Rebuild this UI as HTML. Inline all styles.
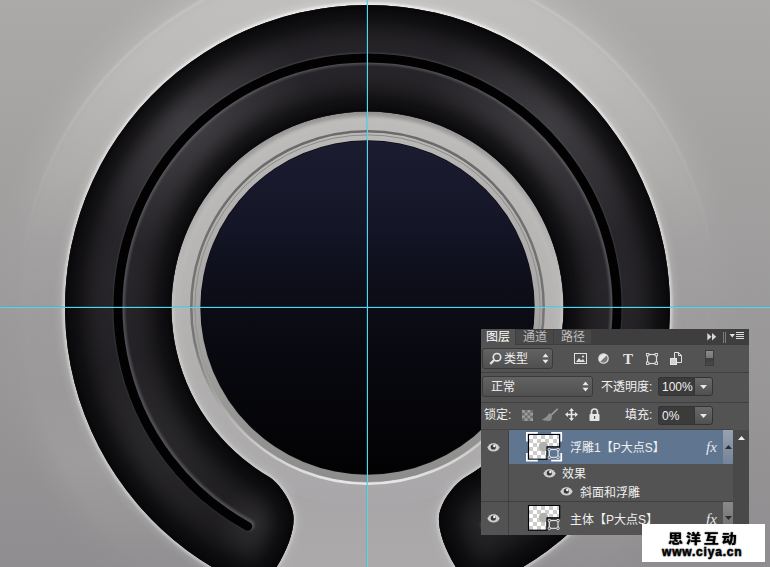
<!DOCTYPE html>
<html lang="zh">
<head>
<meta charset="utf-8">
<title>PS</title>
<style>
html,body{margin:0;padding:0;background:#a09e9e;}
body{width:770px;height:567px;overflow:hidden;position:relative;font-family:"Liberation Sans","Noto Sans CJK SC",sans-serif;}
#art{position:absolute;left:0;top:0;display:block;}
#panel{position:absolute;left:481px;top:329px;width:268px;height:206px;background:#535353;color:#f0f0f0;font-size:12px;overflow:hidden;}
#panel div{position:absolute;box-sizing:border-box;}
#panel .t{white-space:nowrap;line-height:14px;height:14px;}
#wm{position:absolute;left:642px;top:524px;width:123px;height:38px;background:#fff;}
#wm div{position:absolute;white-space:nowrap;color:#000;}
</style>
</head>
<body>
<svg id="art" width="770" height="567" viewBox="0 0 770 567">
<defs>
<linearGradient id="bg" x1="0" y1="0" x2="0" y2="1">
<stop offset="0" stop-color="#abaaa8"/><stop offset="1" stop-color="#8f8d8f"/>
</linearGradient>
<linearGradient id="plat" gradientUnits="userSpaceOnUse" x1="0" y1="-42" x2="0" y2="657">
<stop offset="0" stop-color="#c9c8c6"/><stop offset="0.15" stop-color="#c2c1bf"/><stop offset="0.3" stop-color="#b2b1af"/><stop offset="0.4" stop-color="#a5a3a3"/><stop offset="0.5" stop-color="#9f9d9d"/><stop offset="0.62" stop-color="#9d9b9b"/><stop offset="0.72" stop-color="#a19f9f"/><stop offset="0.8" stop-color="#9a9899"/><stop offset="0.87" stop-color="#929092"/><stop offset="1" stop-color="#8f8d8f"/>
</linearGradient>
<linearGradient id="platin" gradientUnits="userSpaceOnUse" x1="0" y1="-42" x2="0" y2="657">
<stop offset="0" stop-color="#c9c8c6"/><stop offset="0.15" stop-color="#c2c1bf"/><stop offset="0.3" stop-color="#b2b1af"/><stop offset="0.4" stop-color="#a5a3a3"/><stop offset="0.5" stop-color="#9f9d9d"/><stop offset="0.62" stop-color="#9d9b9b"/><stop offset="0.8" stop-color="#a9a7a7"/><stop offset="1" stop-color="#b0aeae"/>
</linearGradient>
<linearGradient id="disc" gradientUnits="userSpaceOnUse" x1="0" y1="141" x2="0" y2="474">
<stop offset="0" stop-color="#1b1c30"/><stop offset="0.25" stop-color="#141526"/><stop offset="0.5" stop-color="#0b0c15"/><stop offset="1" stop-color="#020203"/>
</linearGradient>
<radialGradient id="ringrad" gradientUnits="userSpaceOnUse" cx="367.5" cy="307.5" r="302.5">
<stop offset="0.648" stop-color="#0e0d10"/><stop offset="0.665" stop-color="#18161a"/><stop offset="0.711" stop-color="#211f23"/><stop offset="0.777" stop-color="#2c2a2e"/><stop offset="0.81" stop-color="#353337"/>
<stop offset="0.84" stop-color="#2c2a2e"/><stop offset="0.893" stop-color="#232125"/><stop offset="0.942" stop-color="#19171b"/><stop offset="0.975" stop-color="#111013"/><stop offset="1" stop-color="#09080a"/>
</radialGradient>
<linearGradient id="ringshade" gradientUnits="userSpaceOnUse" x1="0" y1="5" x2="0" y2="567">
<stop offset="0" stop-color="#000" stop-opacity="0.16"/><stop offset="0.2" stop-color="#000" stop-opacity="0.02"/><stop offset="0.5" stop-color="#000" stop-opacity="0.06"/><stop offset="0.8" stop-color="#000" stop-opacity="0.26"/><stop offset="1" stop-color="#000" stop-opacity="0.3"/>
</linearGradient>
<radialGradient id="sheen">
<stop offset="0" stop-color="#fff" stop-opacity="0.13"/><stop offset="0.5" stop-color="#fff" stop-opacity="0.07"/><stop offset="1" stop-color="#fff" stop-opacity="0"/>
</radialGradient>
<linearGradient id="iring" gradientUnits="userSpaceOnUse" x1="0" y1="111" x2="0" y2="504">
<stop offset="0" stop-color="#bdbcba"/><stop offset="0.5" stop-color="#b4b3b1"/><stop offset="1" stop-color="#a9a7a9"/>
</linearGradient>
<linearGradient id="bevel" gradientUnits="userSpaceOnUse" x1="0" y1="132" x2="0" y2="483">
<stop offset="0" stop-color="#bab9b7"/><stop offset="0.5" stop-color="#a8a7a5"/><stop offset="1" stop-color="#8c8c8a"/>
</linearGradient>
<linearGradient id="bevline" gradientUnits="userSpaceOnUse" x1="0" y1="132" x2="0" y2="483">
<stop offset="0" stop-color="#6a6a68"/><stop offset="0.6" stop-color="#777775"/><stop offset="0.8" stop-color="#b0b0ae"/><stop offset="1" stop-color="#e6e6e6"/>
</linearGradient>
<linearGradient id="ridge" gradientUnits="userSpaceOnUse" x1="0" y1="-42" x2="0" y2="657">
<stop offset="0" stop-color="#fff" stop-opacity="0.32"/><stop offset="0.3" stop-color="#fff" stop-opacity="0.12"/><stop offset="0.45" stop-color="#fff" stop-opacity="0"/>
</linearGradient>
<linearGradient id="bevline2" gradientUnits="userSpaceOnUse" x1="0" y1="132" x2="0" y2="483">
<stop offset="0" stop-color="#8a8a88"/><stop offset="0.5" stop-color="#8f8f8d"/><stop offset="0.75" stop-color="#8a8a88" stop-opacity="0"/>
</linearGradient>
<linearGradient id="ishadow" gradientUnits="userSpaceOnUse" x1="0" y1="111" x2="0" y2="370">
<stop offset="0" stop-color="#1a1a1a" stop-opacity="0.42"/><stop offset="0.45" stop-color="#1a1a1a" stop-opacity="0.3"/><stop offset="1" stop-color="#1a1a1a" stop-opacity="0"/>
</linearGradient>
<linearGradient id="edgehl" gradientUnits="userSpaceOnUse" x1="0" y1="0" x2="0" y2="567">
<stop offset="0" stop-color="#ececea"/><stop offset="0.5" stop-color="#d0d0ce"/><stop offset="1" stop-color="#c4c4c4"/>
</linearGradient>
<filter id="b05" color-interpolation-filters="sRGB" x="-10%" y="-10%" width="120%" height="120%"><feGaussianBlur stdDeviation="0.5"/></filter>
<filter id="b1" color-interpolation-filters="sRGB" x="-10%" y="-10%" width="120%" height="120%"><feGaussianBlur stdDeviation="0.8"/></filter>
<filter id="b2" color-interpolation-filters="sRGB" x="-10%" y="-10%" width="120%" height="120%"><feGaussianBlur stdDeviation="2"/></filter>
<filter id="b4" color-interpolation-filters="sRGB" x="-10%" y="-10%" width="120%" height="120%"><feGaussianBlur stdDeviation="3.500"/></filter>
<filter id="b5" color-interpolation-filters="sRGB" x="-10%" y="-10%" width="120%" height="120%"><feGaussianBlur stdDeviation="5"/></filter>
<filter id="b8" color-interpolation-filters="sRGB" x="-10%" y="-10%" width="120%" height="120%"><feGaussianBlur stdDeviation="8"/></filter>
<filter id="b9" color-interpolation-filters="sRGB" x="-10%" y="-10%" width="120%" height="120%"><feGaussianBlur stdDeviation="9"/></filter>
<filter id="b10" color-interpolation-filters="sRGB" x="-10%" y="-10%" width="120%" height="120%"><feGaussianBlur stdDeviation="10"/></filter>
<filter id="b12" color-interpolation-filters="sRGB" x="-10%" y="-10%" width="120%" height="120%"><feGaussianBlur stdDeviation="12"/></filter>
<filter id="b16" color-interpolation-filters="sRGB" x="-20%" y="-20%" width="140%" height="140%"><feGaussianBlur stdDeviation="16"/></filter>
<path id="ringp" d="M270,477.500 C279,483.500 293.6,503 293.6,519 C293.6,533 287,550 276.600,567 L266,585 L247.100,585 A302.5,302.500 0 1 1 487.900,585 L466.500,585 L455.800,567 C445.500,550 438.900,533 438.900,519 C438.900,503 455,483.500 465,477.500 A196,196 0 1 0 270,477.500 Z"/>
<clipPath id="icl"><circle cx="367.5" cy="307.5" r="197"/></clipPath>
<clipPath id="ringclip"><use href="#ringp"/></clipPath>
</defs>
<rect width="770" height="567" fill="url(#bg)"/>
<circle cx="367.5" cy="307.5" r="356" fill="url(#plat)" filter="url(#b16)" opacity="0.7"/>
<circle cx="367.5" cy="307.5" r="348" fill="url(#plat)" filter="url(#b4)" opacity="0.4"/>
<circle cx="367.5" cy="307.5" r="348.500" fill="none" stroke="url(#ridge)" stroke-width="1.600" filter="url(#b1)"/>
<circle cx="367.5" cy="307.5" r="299" fill="url(#platin)"/>
<!-- inner light ring -->
<circle cx="367.5" cy="307.5" r="200" fill="url(#iring)"/>
<!-- outer edge highlight of dark ring -->
<use href="#ringp" fill="none" stroke="url(#edgehl)" stroke-width="12" filter="url(#b4)" opacity="0.28"/>
<use href="#ringp" fill="none" stroke="url(#edgehl)" stroke-width="5" filter="url(#b1)"/>
<g clip-path="url(#icl)"><path d="M177.600,370 A199,199 0 1 1 557.400,370" fill="none" stroke="url(#ishadow)" stroke-width="8" filter="url(#b2)"/></g>
<!-- dark ring -->
<use href="#ringp" fill="#29272b"/>
<g clip-path="url(#ringclip)">
<circle cx="186" cy="126" r="130" fill="url(#sheen)" opacity="0.85"/>
<circle cx="549" cy="126" r="130" fill="url(#sheen)" opacity="0.8"/>
<circle cx="160" cy="450" r="100" fill="url(#sheen)" opacity="0.5"/>
<circle cx="256" cy="524" r="42" fill="url(#sheen)" opacity="0.8"/>
<circle cx="479" cy="524" r="42" fill="url(#sheen)" opacity="0.4"/>
<circle cx="575" cy="450" r="100" fill="url(#sheen)" opacity="0.5"/>
</g>
<g clip-path="url(#ringclip)">
<use href="#ringp" fill="none" stroke="#0a090b" stroke-width="40" filter="url(#b9)" opacity="0.85"/>
<use href="#ringp" fill="none" stroke="#060507" stroke-width="6" filter="url(#b2)" opacity="0.6"/>
</g>
<use href="#ringp" fill="url(#ringshade)"/>
<!-- groove -->
<path d="M248.800,525 A248.200,248.200 0 1 1 486.200,525" fill="none" stroke="#68666b" stroke-width="11.500" stroke-linecap="round" filter="url(#b1)" opacity="0.65"/>
<path d="M247.700,526.350 A249.500,249.500 0 1 1 487.300,526.350" fill="none" stroke="#020203" stroke-width="9" stroke-linecap="round"/>
<!-- bevel ring + disc -->
<circle cx="367.5" cy="307.5" r="176.200" fill="none" stroke="url(#bevline)" stroke-width="2.600" filter="url(#b05)"/>
<circle cx="367.5" cy="307.5" r="174.600" fill="url(#bevel)"/>
<circle cx="367.5" cy="307.5" r="172.600" fill="none" stroke="url(#bevline2)" stroke-width="1"/>
<circle cx="367.5" cy="307.5" r="167.200" fill="#0a0a10"/>
<circle cx="367.5" cy="307.5" r="166.500" fill="url(#disc)"/>
<!-- guides -->
<rect x="0" y="306" width="770" height="1" fill="#00b4d8" fill-opacity="0.22"/>
<rect x="366" y="0" width="1" height="567" fill="#00b4d8" fill-opacity="0.22"/>
<rect x="0" y="307" width="770" height="1" fill="#62d0e6"/>
<rect x="367" y="0" width="1" height="567" fill="#62d0e6"/>
</svg>
<div id="panel">
<div style="left:0;top:0;width:268px;height:16px;background:#3e3e3e"></div>
<div style="left:0;top:0;width:34px;height:17px;background:#535353"></div>
<div style="left:35px;top:1px;width:37px;height:14px;background:#484848"></div>
<div style="left:73px;top:1px;width:37px;height:14px;background:#484848"></div>
<div class="t" style="left:5px;top:1px;color:#fff">图层</div>
<div class="t" style="left:42px;top:1px;color:#bdbdbd">通道</div>
<div class="t" style="left:80px;top:1px;color:#bdbdbd">路径</div>
<div style="left:226px;top:4px"><svg viewBox="0 0 10 8" width="10" height="7.500" style="display:block"><path d="M0,0 L4.500,4 L0,8 Z M5,0 L9.500,4 L5,8 Z" fill="#d8d8d8"/></svg></div>
<div style="left:242px;top:3px;width:1px;height:11px;background:#7c7c7c"></div>
<div style="left:244px;top:3px;width:1px;height:11px;background:#7c7c7c"></div>
<div style="left:248px;top:3px"><svg viewBox="0 0 16 9" width="16" height="9" style="display:block"><path d="M0.500,2 H6 L3.250,5.500 Z" fill="#e0e0e0"/><path d="M7,0.500 H15 M7,2.500 H15 M7,4.500 H15 M7,6.500 H15" stroke="#dcdcdc" stroke-width="1" shape-rendering="crispEdges"/></svg></div>
<!-- filter row -->
<div style="left:1px;top:19px;width:71px;height:21px;border:1px solid #3a3a3a;border-radius:3px;background:linear-gradient(#626262,#505050)"></div>
<div style="left:8px;top:23px"><svg viewBox="0 0 13 13" width="13" height="13" style="display:block"><circle cx="8" cy="5.200" r="3.700" fill="none" stroke="#e6e6e6" stroke-width="1.700"/><path d="M5.200,8 L1.300,11.900" stroke="#e6e6e6" stroke-width="2.200"/></svg></div>
<div class="t" style="left:23px;top:23px">类型</div>
<div style="left:61px;top:24px"><svg viewBox="0 0 7 11" width="7" height="11"><path d="M3.500,0.500 L6.500,4.200 H0.500 Z M3.500,10.500 L6.500,6.800 H0.500 Z" fill="#e8e8e8"/></svg></div>
<div style="left:93px;top:24px"><svg viewBox="0 0 13 11" width="13" height="11" style="display:block"><rect x="0.500" y="0.500" width="12" height="10" fill="none" stroke="#e0e0e0"/><path d="M2,9 L5,5 L7,7.500 L9,6 L11,9 Z" fill="#e0e0e0"/><circle cx="9" cy="3.500" r="1.100" fill="#e0e0e0"/></svg></div>
<div style="left:117px;top:24px"><svg viewBox="0 0 11 11" width="11" height="11" style="display:block"><circle cx="5.500" cy="5.500" r="4.700" fill="#787878" stroke="#e0e0e0" stroke-width="1.200"/><path d="M2.200,8.800 A4.700,4.700 0 0 1 8.800,2.200 Z" fill="#e8e8e8"/></svg></div>
<div class="t" style="left:142px;top:20px;font-family:'Liberation Serif',serif;font-size:15px;font-weight:bold;line-height:20px;height:20px;color:#e4e4e4">T</div>
<div style="left:165px;top:24px"><svg viewBox="0 0 12 12" width="12" height="12" style="display:block"><rect x="1.500" y="1.500" width="9" height="9" fill="none" stroke="#e0e0e0" stroke-width="1.200"/><g fill="#535353" stroke="#e0e0e0" stroke-width="0.900"><rect x="0.500" y="0.500" width="2.400" height="2.400"/><rect x="9.100" y="0.500" width="2.400" height="2.400"/><rect x="0.500" y="9.100" width="2.400" height="2.400"/><rect x="9.100" y="9.100" width="2.400" height="2.400"/></g></svg></div>
<div style="left:189px;top:23px"><svg viewBox="0 0 12 13" width="12" height="13" style="display:block"><path d="M4.500,0.500 H8.500 L11.500,3.500 V10.500 H4.500 Z" fill="#535353" stroke="#e0e0e0"/><path d="M8.500,0.500 V3.500 H11.500" fill="none" stroke="#e0e0e0"/><rect x="0.500" y="6.500" width="6" height="6" fill="#cfcfcf" stroke="#e8e8e8"/></svg></div>
<div style="left:224px;top:21px;width:9px;height:16px;border:1px solid #3c3c3c;background:linear-gradient(#8c8c8c 0,#767676 50%,#3e3e3e 50%,#484848 100%)"></div>
<div style="left:0;top:43px;width:268px;height:1px;background:#404040"></div>
<!-- blend row -->
<div style="left:1px;top:47px;width:111px;height:21px;border:1px solid #3a3a3a;border-radius:3px;background:linear-gradient(#626262,#505050)"></div>
<div class="t" style="left:10px;top:51px">正常</div>
<div style="left:101px;top:52px"><svg viewBox="0 0 7 11" width="7" height="11"><path d="M3.500,0.500 L6.500,4.200 H0.500 Z M3.500,10.500 L6.500,6.800 H0.500 Z" fill="#e8e8e8"/></svg></div>
<div class="t" style="left:120px;top:51px">不透明度:</div>
<div style="left:177px;top:48px;width:36px;height:19px;border:1px solid #333;border-right:none;border-radius:3px 0 0 3px;background:#3b3b3b"></div>
<div class="t" style="left:181px;top:51px">100%</div>
<div style="left:213px;top:48px;width:19px;height:19px;border:1px solid #333;border-radius:0 3px 3px 0;background:linear-gradient(#6a6a6a,#505050)"></div>
<div style="left:219px;top:56px"><svg viewBox="0 0 7 4" width="7" height="4" style="display:block"><path d="M0,0 H7 L3.500,4 Z" fill="#e8e8e8"/></svg></div>
<div style="left:0;top:73px;width:268px;height:1px;background:#404040"></div>
<!-- lock row -->
<div class="t" style="left:3px;top:79px">锁定:</div>
<div style="left:41px;top:81px"><svg viewBox="0 0 12 12" width="11" height="11" style="display:block"><rect width="12" height="12" fill="#6e6e6e"/><g fill="#9c9c9c"><rect x="0" y="0" width="3" height="3"/><rect x="6" y="0" width="3" height="3"/><rect x="3" y="3" width="3" height="3"/><rect x="9" y="3" width="3" height="3"/><rect x="0" y="6" width="3" height="3"/><rect x="6" y="6" width="3" height="3"/><rect x="3" y="9" width="3" height="3"/><rect x="9" y="9" width="3" height="3"/></g></svg></div>
<div style="left:60px;top:79px"><svg viewBox="0 0 18 14" width="18" height="14" style="display:block"><path d="M16.200,0.200 L17.300,1.300 L10.200,8.300 L9,7.100 Z" fill="#9c9c9c"/><path d="M10.800,6.700 L8.300,5 C6.500,8 4,10.500 0.600,11.600 C3,12.900 7.500,13.200 9.800,12.600 C10.800,11 11.100,8.700 10.800,6.700 Z" fill="#8e8e8e"/></svg></div>
<div style="left:84px;top:79px"><svg viewBox="0 0 13 13" width="13" height="13" style="display:block"><path d="M6.500,0 L9,3 H7.300 V5.700 H10 V4 L13,6.500 L10,9 V7.300 H7.300 V10 H9 L6.500,13 L4,10 H5.700 V7.300 H3 V9 L0,6.500 L3,4 V5.700 H5.700 V3 H4 Z" fill="#e4e4e4"/></svg></div>
<div style="left:108px;top:79px"><svg viewBox="0 0 11 13" width="11" height="13" style="display:block"><path d="M2.500,6 V4 A3,3 0 0 1 8.500,4 V6" fill="none" stroke="#e4e4e4" stroke-width="1.700"/><rect x="0.500" y="6" width="10" height="7" rx="0.800" fill="#e4e4e4"/><rect x="5" y="8" width="1.200" height="3" fill="#555"/></svg></div>
<div class="t" style="left:144px;top:79px">填充:</div>
<div style="left:177px;top:77px;width:36px;height:19px;border:1px solid #333;border-right:none;border-radius:3px 0 0 3px;background:#3b3b3b"></div>
<div class="t" style="left:181px;top:80px">0%</div>
<div style="left:213px;top:77px;width:19px;height:19px;border:1px solid #333;border-radius:0 3px 3px 0;background:linear-gradient(#6a6a6a,#505050)"></div>
<div style="left:219px;top:85px"><svg viewBox="0 0 7 4" width="7" height="4" style="display:block"><path d="M0,0 H7 L3.500,4 Z" fill="#e8e8e8"/></svg></div>
<!-- layers -->
<div style="left:0;top:100px;width:252px;height:1px;background:#444"></div>
<div style="left:28px;top:101px;width:214px;height:34px;background:#5f7590"></div>
<div style="left:242px;top:101px;width:10px;height:34px;background:linear-gradient(#98a2b0,#74839a)"></div>
<div style="left:27px;top:102px;width:1px;height:105px;background:#404040"></div>
<div style="left:252px;top:101px;width:16px;height:106px;background:#494949"></div>
<div style="left:257px;top:107px"><svg viewBox="0 0 7 4" width="7" height="4" style="display:block"><path d="M0,4 H7 L3.500,0 Z" fill="#f0f0f0"/></svg></div>
<div style="left:244px;top:116px"><svg viewBox="0 0 7 4" width="7" height="4" style="display:block"><path d="M0,4 H7 L3.500,0 Z" fill="#2c2c2c"/></svg></div>
<div style="left:6px;top:113px"><svg style="display:block" viewBox="0 0 13 10" width="13" height="10"><path d="M0.200,5 C1.800,-1 11.200,-1 12.800,5 C11.200,11 1.800,11 0.200,5 Z" fill="#cfcfcf"/><path d="M0.500,4.600 C2.300,-0.700 10.700,-0.700 12.500,4.600" fill="none" stroke="#3a3a3a" stroke-width="0.900"/><circle cx="6.300" cy="5" r="2.600" fill="#3a3a3a"/><circle cx="7.300" cy="4" r="1.200" fill="#f4f4f4"/></svg></div>
<div style="left:45px;top:103px"><svg style="display:block" viewBox="0 0 37 30" width="37" height="30"><defs><pattern id="ck1" width="8" height="8" patternUnits="userSpaceOnUse" x="3" y="3"><rect width="8" height="8" fill="#fff"/><rect x="4" width="4" height="4" fill="#ccc"/><rect y="4" width="4" height="4" fill="#ccc"/></pattern><clipPath id="tc1"><path d="M3,3 H33.200 V14.400 H20.500 V26.800 H3 Z"/></clipPath></defs><path d="M3,3 H33.200 V14.400 H20.500 V26.800 H3 Z" fill="url(#ck1)"/><circle cx="17.500" cy="14.600" r="4.800" fill="#b1b1ab" clip-path="url(#tc1)"/><path d="M2.500,2.500 H33.700 V14.900 H21 V27.300 H2.500 Z" fill="none" stroke="#000" stroke-width="1.100"/><path d="M0.850,9.500 V0.850 H11.800 M25.200,0.850 H35.250 V9.500 M35.250,21 V28.650 H25.200 M11.800,28.650 H0.850 V21" fill="none" stroke="#fff" stroke-width="1.700"/><rect x="23.300" y="17.600" width="8.700" height="7.700" fill="none" stroke="#f2f2f2" stroke-width="1"/><g fill="#566174" stroke="#f2f2f2" stroke-width="0.800"><circle cx="23.300" cy="17.600" r="1.300"/><circle cx="32" cy="17.600" r="1.300"/><circle cx="23.300" cy="25.300" r="1.300"/><circle cx="32" cy="25.300" r="1.300"/></g></svg></div>
<div class="t" style="left:89px;top:112px">浮雕1【P大点S】</div>
<div class="t" style="left:225px;top:110px;font-family:'Liberation Serif',serif;font-style:italic;font-size:15px;line-height:16px;height:16px;color:#e8e8e8">fx</div>
<div style="left:62px;top:139px"><svg style="display:block" viewBox="0 0 13 10" width="13" height="10"><path d="M0.200,5 C1.800,-1 11.200,-1 12.800,5 C11.200,11 1.800,11 0.200,5 Z" fill="#cfcfcf"/><path d="M0.500,4.600 C2.300,-0.700 10.700,-0.700 12.500,4.600" fill="none" stroke="#3a3a3a" stroke-width="0.900"/><circle cx="6.300" cy="5" r="2.600" fill="#3a3a3a"/><circle cx="7.300" cy="4" r="1.200" fill="#f4f4f4"/></svg></div>
<div class="t" style="left:81px;top:138px">效果</div>
<div style="left:79px;top:157px"><svg style="display:block" viewBox="0 0 13 10" width="13" height="10"><path d="M0.200,5 C1.800,-1 11.200,-1 12.800,5 C11.200,11 1.800,11 0.200,5 Z" fill="#cfcfcf"/><path d="M0.500,4.600 C2.300,-0.700 10.700,-0.700 12.500,4.600" fill="none" stroke="#3a3a3a" stroke-width="0.900"/><circle cx="6.300" cy="5" r="2.600" fill="#3a3a3a"/><circle cx="7.300" cy="4" r="1.200" fill="#f4f4f4"/></svg></div>
<div class="t" style="left:99px;top:157px">斜面和浮雕</div>
<div style="left:0;top:172px;width:252px;height:1px;background:#404040"></div>
<div style="left:242px;top:173px;width:10px;height:34px;background:linear-gradient(#8a8a8a,#6a6a6a)"></div>
<div style="left:244px;top:187px"><svg viewBox="0 0 7 4" width="7" height="4" style="display:block"><path d="M0,0 H7 L3.500,4 Z" fill="#2c2c2c"/></svg></div>
<div style="left:6px;top:184px"><svg style="display:block" viewBox="0 0 13 10" width="13" height="10"><path d="M0.200,5 C1.800,-1 11.200,-1 12.800,5 C11.200,11 1.800,11 0.200,5 Z" fill="#cfcfcf"/><path d="M0.500,4.600 C2.300,-0.700 10.700,-0.700 12.500,4.600" fill="none" stroke="#3a3a3a" stroke-width="0.900"/><circle cx="6.300" cy="5" r="2.600" fill="#3a3a3a"/><circle cx="7.300" cy="4" r="1.200" fill="#f4f4f4"/></svg></div>
<div style="left:45px;top:174px"><svg style="display:block" viewBox="0 0 37 30" width="37" height="30"><defs><pattern id="ck0" width="8" height="8" patternUnits="userSpaceOnUse" x="3" y="3"><rect width="8" height="8" fill="#fff"/><rect x="4" width="4" height="4" fill="#ccc"/><rect y="4" width="4" height="4" fill="#ccc"/></pattern><clipPath id="tc0"><path d="M3,3 H33.200 V14.400 H20.500 V26.800 H3 Z"/></clipPath></defs><path d="M3,3 H33.200 V14.400 H20.500 V26.800 H3 Z" fill="url(#ck0)"/><circle cx="17.500" cy="14.600" r="4.800" fill="#b1b1ab" clip-path="url(#tc0)"/><path d="M2.500,2.500 H33.700 V14.900 H21 V27.300 H2.500 Z" fill="none" stroke="#000" stroke-width="1.100"/><rect x="23.300" y="17.600" width="8.700" height="7.700" fill="none" stroke="#f2f2f2" stroke-width="1"/><g fill="#535353" stroke="#f2f2f2" stroke-width="0.800"><circle cx="23.300" cy="17.600" r="1.300"/><circle cx="32" cy="17.600" r="1.300"/><circle cx="23.300" cy="25.300" r="1.300"/><circle cx="32" cy="25.300" r="1.300"/></g></svg></div>
<div class="t" style="left:89px;top:184px">主体【P大点S】</div>
<div class="t" style="left:225px;top:182px;font-family:'Liberation Serif',serif;font-style:italic;font-size:15px;line-height:16px;height:16px;color:#e8e8e8">fx</div>
</div>
<div id="wm">
<div style="left:26px;top:6px;font-family:'Liberation Sans','Noto Sans CJK SC',sans-serif;font-weight:900;font-size:15px;line-height:16px;letter-spacing:2.900px;transform:scaleY(0.860);transform-origin:50% 60%;text-shadow:0 0 2px #8a8a8a,0 0 1px #8a8a8a">思洋互动</div>
<div style="left:20px;top:21px;font-family:'Liberation Sans',sans-serif;font-weight:bold;font-size:12px;line-height:14px;letter-spacing:0.800px;-webkit-text-stroke:0.400px #000;text-shadow:0 0 2px #8a8a8a,0 0 1px #8a8a8a">www.ciya.cn</div>
</div>
</body>
</html>
